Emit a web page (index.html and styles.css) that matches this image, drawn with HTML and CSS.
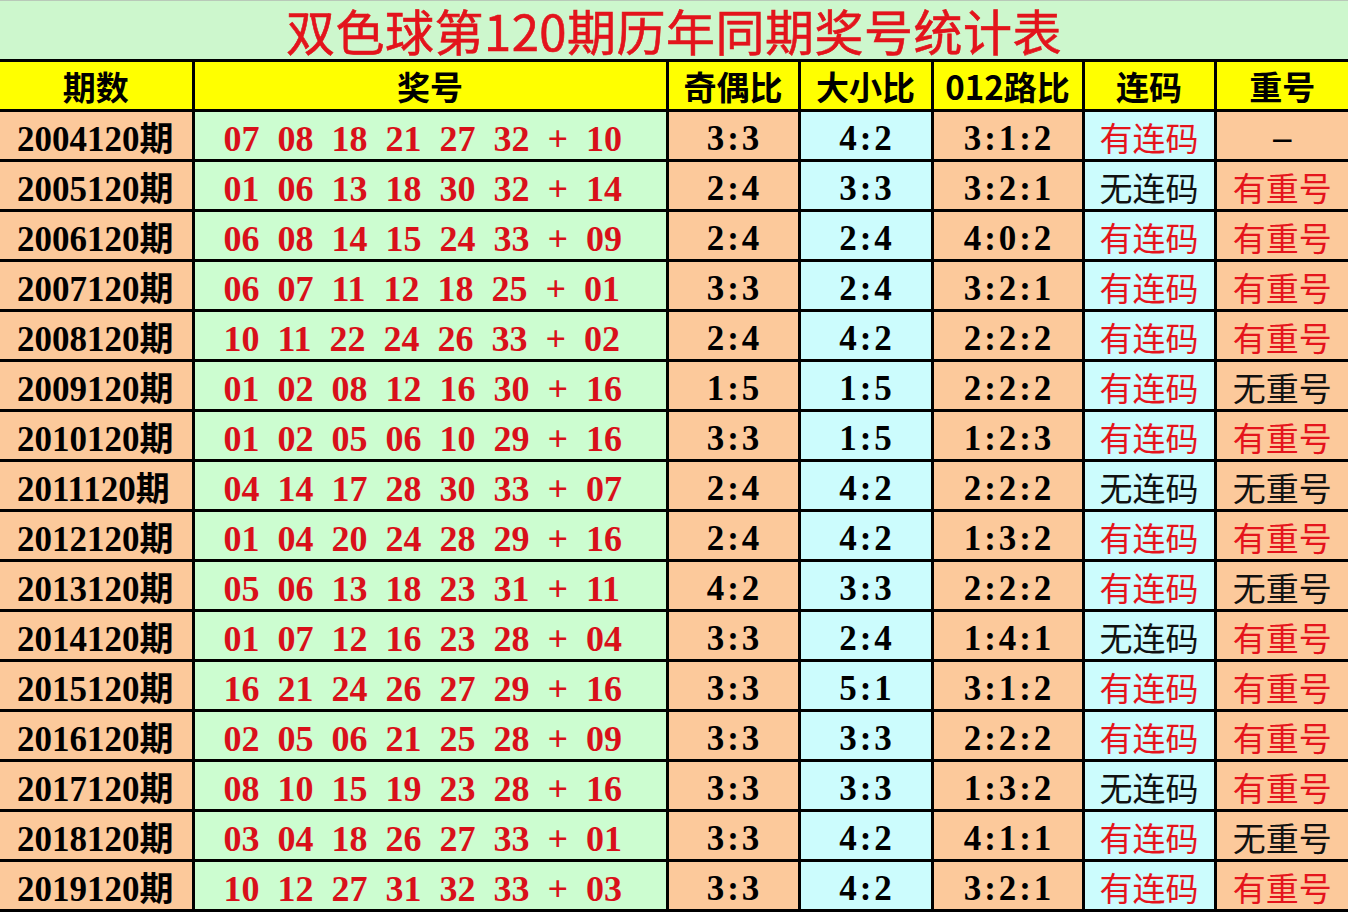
FILE: index.html
```html
<!DOCTYPE html>
<html lang="zh-CN">
<head>
<meta charset="utf-8">
<title>双色球第120期历年同期奖号统计表</title>
<link rel="stylesheet" href="styles.css">
</head>
<body>
<table class="sheet">
  <colgroup>
    <col class="c-issue"><col class="c-nums"><col class="c-oe"><col class="c-bs"><col class="c-road"><col class="c-lian"><col class="c-chong">
  </colgroup>
  <thead>
    <tr class="title-row"><th colspan="7" class="title">双色球第120期历年同期奖号统计表</th></tr>
    <tr class="head-row">
      <th class="h">期数</th><th class="h">奖号</th><th class="h">奇偶比</th><th class="h">大小比</th><th class="h">012路比</th><th class="h">连码</th><th class="h">重号</th>
    </tr>
  </thead>
  <tbody id="rows">
    <tr><td class="issue">2004120<span class="q">期</span></td><td class="nums">07 08 18 21 27 32 + 10</td><td class="ratio peach">3<span class="k">:</span>3</td><td class="ratio cyan">4<span class="k">:</span>2</td><td class="ratio peach">3<span class="k">:</span>1<span class="k">:</span>2</td><td class="word cyan red">有连码</td><td class="word peach dash">–</td></tr>
    <tr><td class="issue">2005120<span class="q">期</span></td><td class="nums">01 06 13 18 30 32 + 14</td><td class="ratio peach">2<span class="k">:</span>4</td><td class="ratio cyan">3<span class="k">:</span>3</td><td class="ratio peach">3<span class="k">:</span>2<span class="k">:</span>1</td><td class="word cyan">无连码</td><td class="word peach red">有重号</td></tr>
    <tr><td class="issue">2006120<span class="q">期</span></td><td class="nums">06 08 14 15 24 33 + 09</td><td class="ratio peach">2<span class="k">:</span>4</td><td class="ratio cyan">2<span class="k">:</span>4</td><td class="ratio peach">4<span class="k">:</span>0<span class="k">:</span>2</td><td class="word cyan red">有连码</td><td class="word peach red">有重号</td></tr>
    <tr><td class="issue">2007120<span class="q">期</span></td><td class="nums">06 07 11 12 18 25 + 01</td><td class="ratio peach">3<span class="k">:</span>3</td><td class="ratio cyan">2<span class="k">:</span>4</td><td class="ratio peach">3<span class="k">:</span>2<span class="k">:</span>1</td><td class="word cyan red">有连码</td><td class="word peach red">有重号</td></tr>
    <tr><td class="issue">2008120<span class="q">期</span></td><td class="nums">10 11 22 24 26 33 + 02</td><td class="ratio peach">2<span class="k">:</span>4</td><td class="ratio cyan">4<span class="k">:</span>2</td><td class="ratio peach">2<span class="k">:</span>2<span class="k">:</span>2</td><td class="word cyan red">有连码</td><td class="word peach red">有重号</td></tr>
    <tr><td class="issue">2009120<span class="q">期</span></td><td class="nums">01 02 08 12 16 30 + 16</td><td class="ratio peach">1<span class="k">:</span>5</td><td class="ratio cyan">1<span class="k">:</span>5</td><td class="ratio peach">2<span class="k">:</span>2<span class="k">:</span>2</td><td class="word cyan red">有连码</td><td class="word peach">无重号</td></tr>
    <tr><td class="issue">2010120<span class="q">期</span></td><td class="nums">01 02 05 06 10 29 + 16</td><td class="ratio peach">3<span class="k">:</span>3</td><td class="ratio cyan">1<span class="k">:</span>5</td><td class="ratio peach">1<span class="k">:</span>2<span class="k">:</span>3</td><td class="word cyan red">有连码</td><td class="word peach red">有重号</td></tr>
    <tr><td class="issue">2011120<span class="q">期</span></td><td class="nums">04 14 17 28 30 33 + 07</td><td class="ratio peach">2<span class="k">:</span>4</td><td class="ratio cyan">4<span class="k">:</span>2</td><td class="ratio peach">2<span class="k">:</span>2<span class="k">:</span>2</td><td class="word cyan">无连码</td><td class="word peach">无重号</td></tr>
    <tr><td class="issue">2012120<span class="q">期</span></td><td class="nums">01 04 20 24 28 29 + 16</td><td class="ratio peach">2<span class="k">:</span>4</td><td class="ratio cyan">4<span class="k">:</span>2</td><td class="ratio peach">1<span class="k">:</span>3<span class="k">:</span>2</td><td class="word cyan red">有连码</td><td class="word peach red">有重号</td></tr>
    <tr><td class="issue">2013120<span class="q">期</span></td><td class="nums">05 06 13 18 23 31 + 11</td><td class="ratio peach">4<span class="k">:</span>2</td><td class="ratio cyan">3<span class="k">:</span>3</td><td class="ratio peach">2<span class="k">:</span>2<span class="k">:</span>2</td><td class="word cyan red">有连码</td><td class="word peach">无重号</td></tr>
    <tr><td class="issue">2014120<span class="q">期</span></td><td class="nums">01 07 12 16 23 28 + 04</td><td class="ratio peach">3<span class="k">:</span>3</td><td class="ratio cyan">2<span class="k">:</span>4</td><td class="ratio peach">1<span class="k">:</span>4<span class="k">:</span>1</td><td class="word cyan">无连码</td><td class="word peach red">有重号</td></tr>
    <tr><td class="issue">2015120<span class="q">期</span></td><td class="nums">16 21 24 26 27 29 + 16</td><td class="ratio peach">3<span class="k">:</span>3</td><td class="ratio cyan">5<span class="k">:</span>1</td><td class="ratio peach">3<span class="k">:</span>1<span class="k">:</span>2</td><td class="word cyan red">有连码</td><td class="word peach red">有重号</td></tr>
    <tr><td class="issue">2016120<span class="q">期</span></td><td class="nums">02 05 06 21 25 28 + 09</td><td class="ratio peach">3<span class="k">:</span>3</td><td class="ratio cyan">3<span class="k">:</span>3</td><td class="ratio peach">2<span class="k">:</span>2<span class="k">:</span>2</td><td class="word cyan red">有连码</td><td class="word peach red">有重号</td></tr>
    <tr><td class="issue">2017120<span class="q">期</span></td><td class="nums">08 10 15 19 23 28 + 16</td><td class="ratio peach">3<span class="k">:</span>3</td><td class="ratio cyan">3<span class="k">:</span>3</td><td class="ratio peach">1<span class="k">:</span>3<span class="k">:</span>2</td><td class="word cyan">无连码</td><td class="word peach red">有重号</td></tr>
    <tr><td class="issue">2018120<span class="q">期</span></td><td class="nums">03 04 18 26 27 33 + 01</td><td class="ratio peach">3<span class="k">:</span>3</td><td class="ratio cyan">4<span class="k">:</span>2</td><td class="ratio peach">4<span class="k">:</span>1<span class="k">:</span>1</td><td class="word cyan red">有连码</td><td class="word peach">无重号</td></tr>
    <tr><td class="issue">2019120<span class="q">期</span></td><td class="nums">10 12 27 31 32 33 + 03</td><td class="ratio peach">3<span class="k">:</span>3</td><td class="ratio cyan">4<span class="k">:</span>2</td><td class="ratio peach">3<span class="k">:</span>2<span class="k">:</span>1</td><td class="word cyan red">有连码</td><td class="word peach red">有重号</td></tr>
  </tbody>
</table>
</body>
</html>
```

FILE: styles.css
```css
html, body {
  margin: 0;
  padding: 0;
  background: #ffffff;
}

.sheet {
  width: 1348px;
  table-layout: fixed;
  border-collapse: collapse;
  border-spacing: 0;
}

.c-issue { width: 193px; }
.c-nums { width: 474px; }
.c-oe { width: 132px; }
.c-bs { width: 133px; }
.c-road { width: 151px; }
.c-lian { width: 132px; }
.c-chong { width: 133px; }

.sheet th,
.sheet td {
  border: 3px solid #000;
  padding: 0;
  text-align: center;
  vertical-align: middle;
  overflow: hidden;
  white-space: pre;
}

.sheet tr > :first-child { border-left: none; }
.sheet tr > :last-child { border-right: none; }

.title-row { height: 60px; }
.sheet .title {
  background: #cdf7cd;
  border-top: 1px solid #b9c9b9;
  color: #e3141c;
  font-family: "Noto Sans CJK SC", sans-serif;
  font-size: 49px;
  font-weight: 400;
  line-height: 58px;
  letter-spacing: 0.5px;
  -webkit-text-stroke: 0.6px #e3141c;
  overflow: visible;
}

.head-row { height: 50px; }
.h {
  background: #ffff00;
  color: #000;
  font-family: "Noto Sans CJK SC", sans-serif;
  font-size: 33px;
  font-weight: 700;
  line-height: 44px;
}

#rows tr { height: 50px; }

.sheet .issue {
  background: #fcc99b;
  color: #000;
  font-family: "Liberation Serif", "Noto Sans CJK SC", serif;
  font-size: 35px;
  font-weight: 700;
  line-height: 36px;
  text-align: left;
  padding: 6px 0 0 17px;
}
.issue .q {
  font-family: "Noto Sans CJK SC", sans-serif;
  font-weight: 700;
  font-size: 34px;
}

.sheet .nums {
  background: #ccfdd0;
  color: #d9101a;
  font-family: "Liberation Serif", serif;
  font-size: 36px;
  font-weight: 700;
  line-height: 36px;
  word-spacing: 9px;
  text-align: left;
  padding: 6px 0 0 29px;
}

.sheet .ratio {
  color: #000;
  font-family: "Liberation Serif", serif;
  font-size: 35px;
  font-weight: 700;
  line-height: 36px;
  padding-top: 6px;
}
.ratio .k {
  display: inline-block;
  width: 0.5em;
  text-align: center;
}

.sheet .word {
  color: #111;
  font-family: "Noto Sans CJK SC", sans-serif;
  font-size: 33px;
  font-weight: 400;
  line-height: 38px;
  padding-top: 2px;
}
.sheet .word.red { color: #e5141c; }
.sheet .word.dash {
  font-family: "Liberation Serif", serif;
  font-size: 36px;
  font-weight: 700;
  color: #000;
}

.peach { background: #fcc99b; }
.cyan { background: #ccfcfd; }
```
